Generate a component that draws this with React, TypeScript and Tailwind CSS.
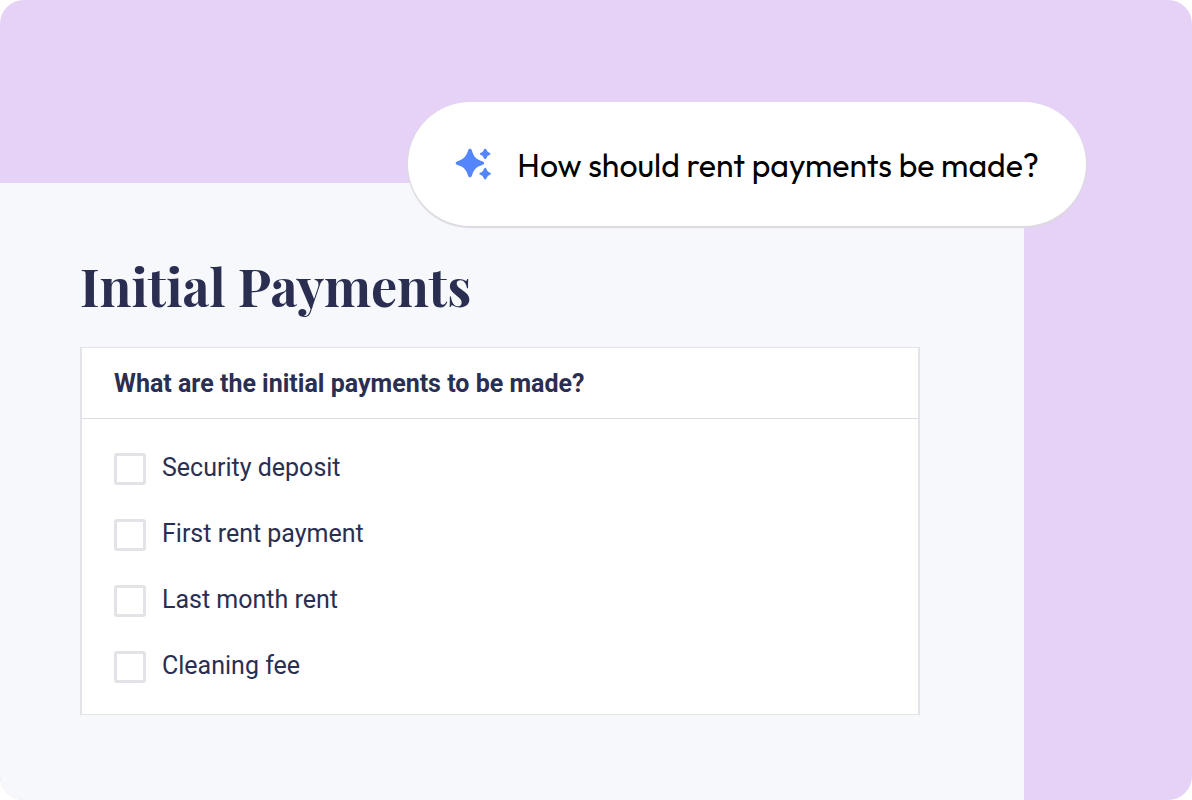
import React from 'react';

const PAYMENTS = [
  { id: 'security-deposit', label: 'Security deposit' },
  { id: 'first-rent', label: 'First rent payment' },
  { id: 'last-month', label: 'Last month rent' },
  { id: 'cleaning-fee', label: 'Cleaning fee' },
];

function Sparkles() {
  return (
    <svg width="36" height="32" viewBox="0 0 36 32" fill="#5585fb" aria-hidden="true" className="shrink-0">
      <path d="M13.2 2.2C14 .4 16 .4 16.800 2.200C18.800 8.600 20.200 10.800 27.800 13.400C29.600 14.200 29.600 16 27.800 16.800C20.800 19.200 19 21.400 16.800 28C16 29.800 14 29.800 13.200 28C11 21.400 9.200 19.200 2 16.800C.2 16 .2 14.200 2 13.400C9.200 10.800 11 8.600 13.200 2.200Z" />
      <path d="M29.200 1.100Q30.200 .2 31.100 1.100L32.200 3.100Q32.600 3.900 33.500 4.300L35 5.100Q35.800 5.900 35 6.700L33.300 7.600Q32.500 8.100 32.100 8.900L31.100 10.700Q30.200 11.500 29.200 10.700L28.200 8.900Q27.800 8.100 27 7.600L25.300 6.700Q24.500 5.900 25.300 5.100L27 4.200Q27.800 3.800 28.200 3Z" />
      <path d="M29.200 20.300Q30.200 19.400 31.100 20.300L32.400 22.700Q32.800 23.500 33.600 23.900L35.500 24.900Q36.300 25.700 35.500 26.500L33.600 27.500Q32.800 28 32.400 28.800L31.100 31.100Q30.200 31.900 29.200 31.100L28 28.800Q27.600 28 26.800 27.500L24.800 26.500Q24 25.700 24.800 24.900L26.800 23.900Q27.600 23.500 28 22.700Z" />
    </svg>
  );
}

export default function App() {
  return (
    <div className="relative flex min-h-screen flex-col overflow-hidden rounded-3xl bg-[#e5d2f6] pt-[183px] pr-[168px]">
      <main className="flex-1 bg-[#f6f8fc] pt-[71px] pr-[104px] pb-20 pl-20">
        <h1 className="whitespace-nowrap font-['Playfair_Display','Liberation_Serif',serif] text-[52px] leading-[64px] font-bold text-[#2a2f52]">
          Initial Payments
        </h1>
        <fieldset aria-labelledby="payments-question" className="mt-[29px] border-x-2 border-y border-[#e2e4e7] bg-white">
          <h2 id="payments-question" className="border-b border-[#dcdee1] px-8 pt-[19px] pb-[17px] font-[Roboto,sans-serif] text-[25px] leading-[34px] font-bold text-[#2a2f52]">
            What are the initial payments to be made?
          </h2>
          <div className="flex flex-col gap-[34px] px-8 pt-[34px] pb-[31px]">
            {PAYMENTS.map(({ id, label }) => (
              <div key={id} className="flex h-8 items-center gap-4">
                <input id={id} type="checkbox" className="size-8 shrink-0 appearance-none rounded-[3px] border-3 border-[#e1e3e6] bg-white checked:bg-[#5585fb]" />
                <label htmlFor={id} className="pb-[2px] font-[Roboto,sans-serif] text-[25px] leading-[30px] text-[#2a2f52]">
                  {label}
                </label>
              </div>
            ))}
          </div>
        </fieldset>
      </main>

      {/* assistant prompt floating over the form */}
      <div className="absolute top-[102px] right-[106px] flex h-[124px] items-center gap-[26px] rounded-full bg-white px-[47px] shadow-[0_1px_1px_1px_#dcd9e0]">
        <Sparkles />
        <p className="whitespace-nowrap pt-[2px] font-[Outfit,Lato,sans-serif] text-[32px] leading-10 text-black">How should rent payments be made?</p>
      </div>
    </div>
  );
}
